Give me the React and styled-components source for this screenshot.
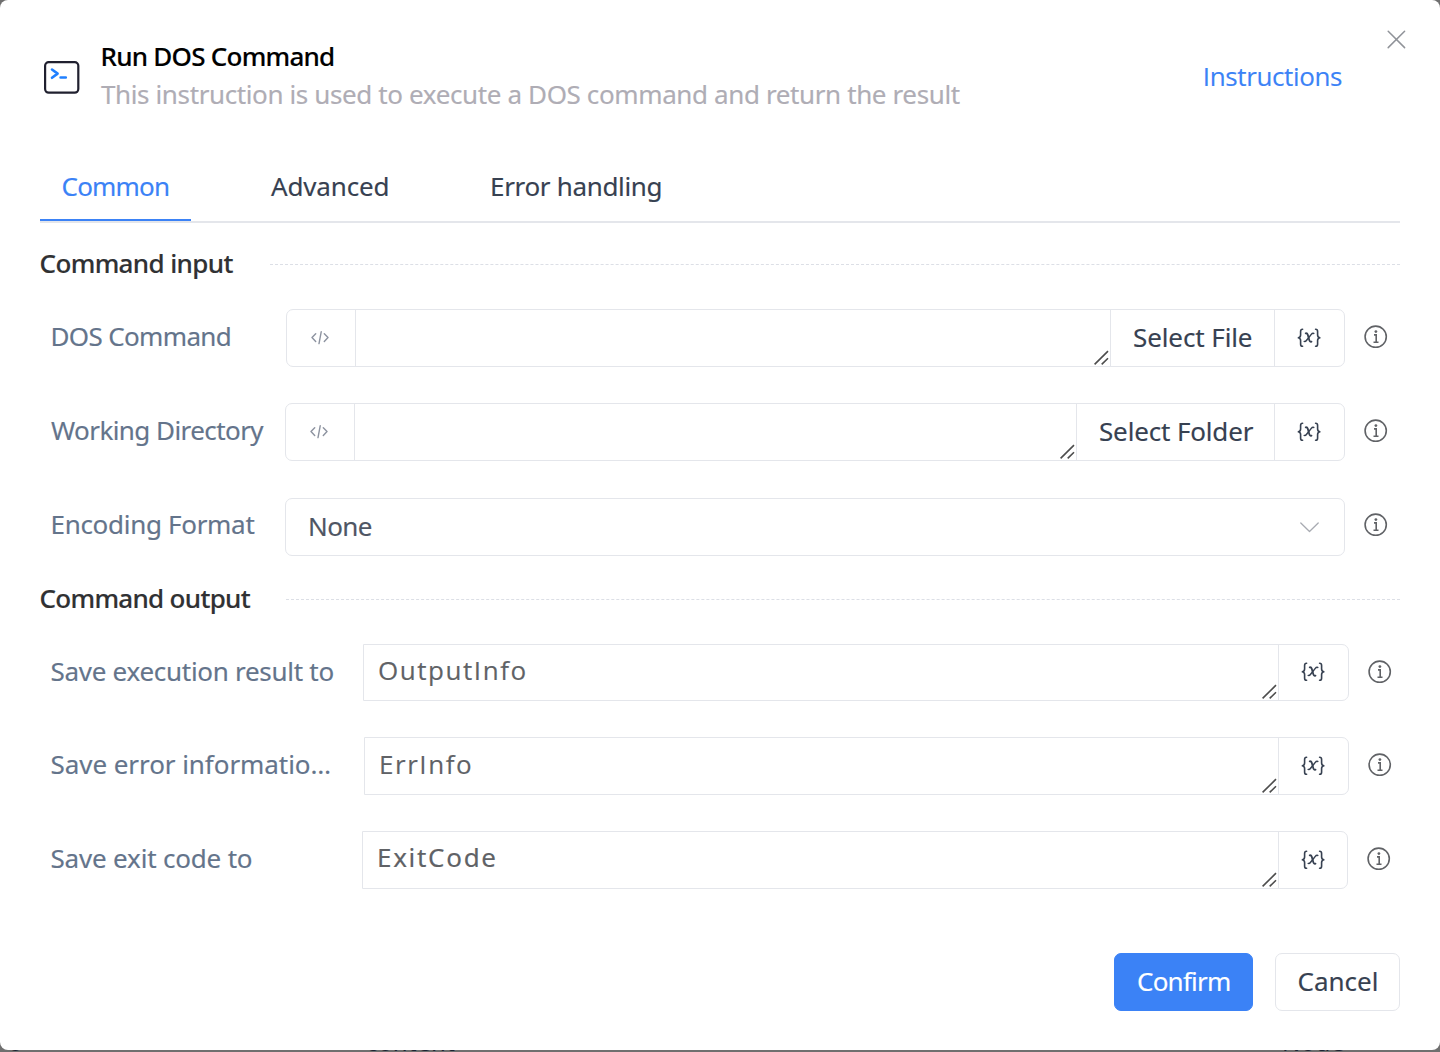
import React from "react";
import styled, { createGlobalStyle, css } from "styled-components";

const line = "#e4e6eb";
const blue = "#3b82f6";
const ink = "#374151";

const GlobalStyle = createGlobalStyle`
  *, *::before, *::after { box-sizing: border-box; }
  body { margin: 0; background: #6f6f6f; }
  svg { display: block; flex: none; }
`;

const Page = styled.div`
  position: relative;
  height: 1052px;
  overflow: hidden;
  background: #6f6f6f;
  font: 400 26px/36px "Noto Sans", "Open Sans", sans-serif;
  color: ${ink};
`;

const Backdrop = styled.div`
  position: absolute;
  left: 0;
  right: 0;
  bottom: -7px;
  height: 34px;
  font-size: 24px;
  line-height: 34px;
  color: #1c2433;
`;

const BackdropWord = styled.span`
  position: absolute;
  left: ${(p) => p.$left}px;
  letter-spacing: 0.4px;
`;

const Dialog = styled.main`
  position: relative;
  display: flex;
  flex-direction: column;
  height: 1050px;
  padding: 38px 40px;
  background: #fff;
  border-radius: 8px;
`;

const Text = styled.span`
  display: block;
  white-space: pre;
  letter-spacing: ${(p) => p.$ls || 0}px;
  -webkit-text-stroke: 0.15px currentColor;
  ${(p) => p.$plainI && css`font-family: "Open Sans", "Noto Sans", sans-serif;`}
`;

const CloseButton = styled.button`
  position: absolute;
  top: 30px;
  right: 34px;
  padding: 0;
  border: 0;
  background: none;
  color: #909399;
`;

const Header = styled.header`
  display: flex;
  height: 74px;
`;

const HeaderIcon = styled.div`
  width: 61px;
  padding: 23px 0 0 4px;
`;

const Titles = styled.div`
  flex: 1;
  display: grid;
  gap: 2px;
  align-content: start;
`;

const Title = styled(Text)`
  margin-left: -0.5px;
  font-weight: 500;
  color: #000;
`;

const Description = styled(Text)`
  color: #afadb5;
`;

const Instructions = styled(Text)`
  padding: 20px 58px 0 0;
  color: ${blue};
`;

const Tabs = styled.nav`
  display: flex;
  gap: 58px;
  height: 55px;
  margin-top: 56px;
  border-bottom: 2px solid ${line};
`;

const Tab = styled.div`
  width: ${(p) => p.$width}px;
  padding-left: ${(p) => p.$pad}px;
  border-bottom: 2px solid ${(p) => (p.$active ? blue : "transparent")};
  color: ${(p) => (p.$active ? blue : ink)};
`;

const SectionTitle = styled.div`
  display: flex;
  align-items: center;
  gap: ${(p) => p.$gap}px;
  height: 37px;
  margin-top: ${(p) => p.$top}px;
  margin-bottom: 27px;
  font-weight: 500;
  color: #303133;
`;

const SectionName = styled(Text)`
  width: ${(p) => p.$width}px;
  margin-left: -1px;
  padding-left: 0.5px;
  height: 37px;
`;

const Rule = styled.div`
  flex: 1;
  margin-top: 2px;
  border-top: 1px dashed #dcdfe6;
`;

const Row = styled.div`
  display: flex;
  height: ${(p) => p.$height || 58}px;
  margin-bottom: ${(p) => p.$after}px;
`;

const Label = styled(Text)`
  width: ${(p) => p.$width}px;
  padding: ${(p) => p.$dy}px 0 0 ${(p) => p.$pad}px;
  color: #64748b;
`;

const Field = styled.div`
  display: flex;
  width: ${(p) => p.$width}px;
  border: 1px solid ${line};
  border-radius: ${(p) => (p.$square ? "0 7px 7px 0" : "7px")};
`;

const Prefix = styled.div`
  display: flex;
  align-items: center;
  justify-content: center;
  width: 69px;
  padding-right: 2px;
  border-right: 1px solid ${line};
  color: #8d93a0;
`;

const Input = styled.div`
  flex: 1;
  display: flex;
  align-items: flex-end;
  justify-content: space-between;
  padding: 0 1px 1px 14px;
  color: #606266;
`;

const Value = styled(Text)`
  align-self: flex-start;
  padding-top: ${(p) => p.$dy}px;
`;

const PickButton = styled.div`
  width: ${(p) => p.$width}px;
  padding: 9px 0 0 22px;
  border-left: 1px solid ${line};
`;

const VariableButton = styled.div`
  display: flex;
  align-items: center;
  width: ${(p) => p.$width || 70}px;
  padding: 0 0 1px 22px;
  border-left: 1px solid ${line};
`;

const SelectBox = styled(Field)`
  justify-content: space-between;
  padding: 9px 25px 0 22px;
  color: #4f5664;
`;

const Caret = styled.div`
  padding-top: 14px;
`;

const Hint = styled.div`
  padding: ${(p) => p.$dy}px 0 0 19px;
  color: #606266;
`;

const Footer = styled.footer`
  display: flex;
  justify-content: flex-end;
  gap: 22px;
  margin-top: 64px;
`;

const Button = styled.div`
  width: ${(p) => p.$width}px;
  height: 58px;
  padding: 9px 0 0 ${(p) => p.$pad}px;
  border: 1px solid ${(p) => (p.$primary ? blue : line)};
  border-radius: 7px;
  background: ${(p) => (p.$primary ? blue : "#fff")};
  color: ${(p) => (p.$primary ? "#fff" : ink)};
`;

const TerminalIcon = () => (
  <svg width="36" height="33" viewBox="0 0 36 33" fill="none" strokeLinecap="round" strokeLinejoin="round">
    <rect x="1.1" y="1.1" width="33.2" height="30.6" rx="3.6" stroke="#20202f" strokeWidth="2.2" />
    <path d="M8 8.5l5.6 4.1L8 16.8M16.6 16.5h5.2" stroke="#2080ff" strokeWidth="2.6" />
  </svg>
);

const CloseIcon = () => (
  <svg width="19" height="19" viewBox="0 0 19 19" fill="none" stroke="currentColor" strokeWidth="1.5" strokeLinecap="round">
    <path d="M1.2 1.2l16.4 16.4M17.6 1.2L1.2 17.6" />
  </svg>
);

const CodeIcon = () => (
  <svg width="18" height="14" viewBox="0 0 18 14" fill="none" stroke="currentColor" strokeWidth="1.4" strokeLinecap="round" strokeLinejoin="round">
    <path d="M4.7 2.800L1 6.600l3.700 4M13.300 2.800L17 6.600l-3.700 4M10.200 .8L8 12.600" />
  </svg>
);

const VariableIcon = () => (
  <svg width="24" height="20" viewBox="0 0 24 20" fill="none" stroke={ink} strokeWidth="1.6" strokeLinecap="round" strokeLinejoin="round">
    <path d="M5.6 1.300C3.800 1.300 3.600 2.100 3.600 3.400v3.600c0 1.500-.6 2.500-2.200 2.800 1.600.3 2.200 1.300 2.200 2.800v3.600c0 1.300.2 2.100 2 2.100" />
    <path d="M18.600 1.300c1.800 0 2 .8 2 2.100v3.600c0 1.500.6 2.500 2.200 2.800-1.600.3-2.200 1.300-2.200 2.800v3.600c0 1.300-.2 2.100-2 2.100" />
    <path d="M8.700 5.300c1.200-.2 1.700.2 2 1.300l1.700 5.800c.3 1.200.9 1.600 2.100 1.200" strokeWidth="1.800" />
    <path d="M16.800 5.500c-1-.4-1.700-.1-2.500.9l-4.900 6.100c-.7.9-1.300 1.200-2.200.9" strokeWidth="1.500" />
  </svg>
);

const InfoIcon = () => (
  <svg width="24" height="24" viewBox="0 0 24 24" fill="none" stroke="currentColor" strokeWidth="1.600">
    <circle cx="11.700" cy="11.700" r="10.600" />
    <path d="M10 9.900h2.200v7.200M9.500 17.200h5" />
    <circle cx="11.900" cy="6.600" r="1.400" fill="currentColor" stroke="none" />
  </svg>
);

const ResizeIcon = () => (
  <svg width="15" height="15" viewBox="0 0 15 15" fill="none" stroke="#4d4d4d" strokeWidth="1.600">
    <path d="M.6 14.400L14 1.100M7.700 14.400L14 8.200" />
  </svg>
);

const ChevronIcon = () => (
  <svg width="19" height="11" viewBox="0 0 19 11" fill="none" stroke="#a8abb2" strokeWidth="1.300" strokeLinecap="round" strokeLinejoin="round">
    <path d="M.8 1l8.700 8.500L18.200 1" />
  </svg>
);

const PathRow = ({ label, labelWidth, labelPad, ls, width, pick, pickWidth, pickLs, after }) => (
  <Row $after={after}>
    <Label $width={labelWidth} $pad={labelPad} $dy={9} $ls={ls}>{label}</Label>
    <Field $width={width}>
      <Prefix><CodeIcon /></Prefix>
      <Input><span /><ResizeIcon /></Input>
      <PickButton $width={pickWidth}><Text $ls={pickLs}>{pick}</Text></PickButton>
      <VariableButton><VariableIcon /></VariableButton>
    </Field>
    <Hint $dy={16}><InfoIcon /></Hint>
  </Row>
);

const OutputRow = ({ label, labelWidth, ls, width, value, valueDy, valueLs, valueSans, variableWidth, height, after }) => (
  <Row $height={height} $after={after}>
    <Label $width={labelWidth} $pad={10.5} $dy={9} $ls={ls}>{label}</Label>
    <Field $width={width} $square>
      <Input>
        <Value $dy={valueDy} $ls={valueLs} $plainI={valueSans}>{value}</Value>
        <ResizeIcon />
      </Input>
      <VariableButton $width={variableWidth}><VariableIcon /></VariableButton>
    </Field>
    <Hint $dy={16}><InfoIcon /></Hint>
  </Row>
);

export default function App() {
  return (
    <Page>
      <GlobalStyle />
      <Backdrop aria-hidden="true">
        <BackdropWord $left={8}>o</BackdropWord>
        <BackdropWord $left={366}>content</BackdropWord>
        <BackdropWord $left={1282}>Node</BackdropWord>
      </Backdrop>
      <Dialog>
        <CloseButton aria-label="Close"><CloseIcon /></CloseButton>
        <Header>
          <HeaderIcon><TerminalIcon /></HeaderIcon>
          <Titles>
            <Title $ls={-0.75}>Run DOS Command</Title>
            <Description $ls={-0.38}>This instruction is used to execute a DOS command and return the result</Description>
          </Titles>
          <Instructions $plainI $ls={-0.38}>Instructions</Instructions>
        </Header>

        <Tabs>
          <Tab $active $width={151} $pad={21.5}><Text $ls={-0.8}>Common</Text></Tab>
          <Tab $width={160} $pad={22}><Text $ls={-0.15}>Advanced</Text></Tab>
          <Tab $width={220} $pad={23}><Text $ls={-0.33}>Error handling</Text></Tab>
        </Tabs>

        <SectionTitle $top={22} $gap={30}>
          <SectionName $width={201} $ls={-0.63}>Command input</SectionName>
          <Rule />
        </SectionTitle>
        <PathRow label="DOS Command" labelWidth={246} labelPad={10.5} ls={-0.65} width={1059} pick="Select File" pickWidth={164} pickLs={-0.1} after={36} />
        <PathRow label="Working Directory" labelWidth={245} labelPad={11} ls={-0.57} width={1060} pick="Select Folder" pickWidth={198} pickLs={-0.15} after={37} />
        <Row $after={0}>
          <Label $width={245} $pad={10.5} $dy={8} $ls={-0.3}>Encoding Format</Label>
          <SelectBox $width={1060}>
            <Text $ls={-0.6}>None</Text>
            <Caret><ChevronIcon /></Caret>
          </SelectBox>
          <Hint $dy={15}><InfoIcon /></Hint>
        </Row>

        <SectionTitle $top={24} $gap={30}>
          <SectionName $width={217} $ls={-0.7}>Command output</SectionName>
          <Rule />
        </SectionTitle>
        <OutputRow label="Save execution result to" labelWidth={323} ls={-0.28} width={986} value="OutputInfo" valueDy={7} valueLs={1.55} valueSans variableWidth={70} height={57} after={36} />
        <OutputRow label="Save error informatio…" labelWidth={324} ls={-0.06} width={985} value="ErrInfo" valueDy={8} valueLs={1.55} valueSans variableWidth={70} after={36} />
        <OutputRow label="Save exit code to" labelWidth={322} ls={-0.18} width={986} value="ExitCode" valueDy={7} valueLs={1.7} variableWidth={69} after={0} />

        <Footer>
          <Button $primary $width={139} $pad={22}><Text $ls={-0.78}>Confirm</Text></Button>
          <Button $width={125} $pad={21.500}><Text $ls={0}>Cancel</Text></Button>
        </Footer>
      </Dialog>
    </Page>
  );
}
